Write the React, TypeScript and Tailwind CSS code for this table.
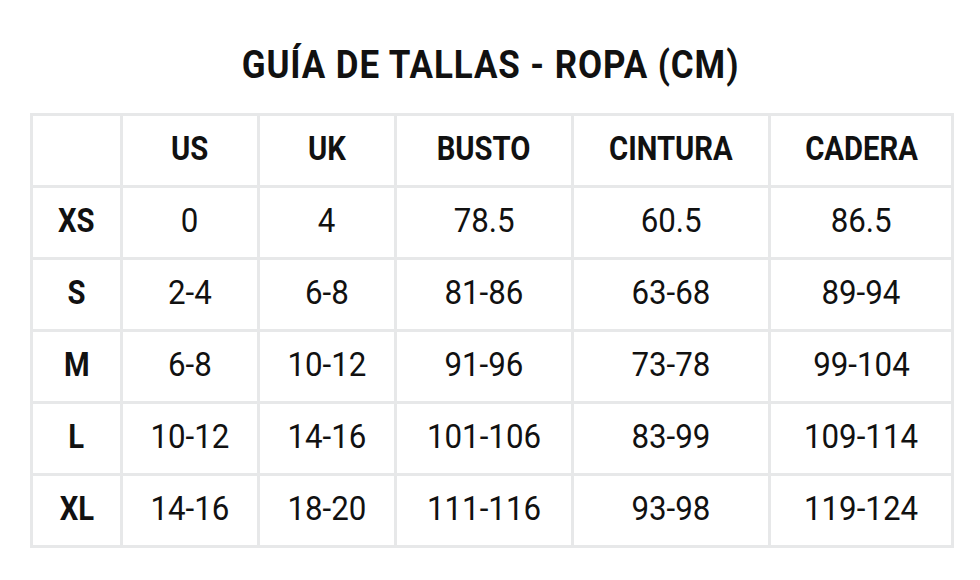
import React from "react";

const header = ["", "US", "UK", "BUSTO", "CINTURA", "CADERA"];
const rows = [
  ["XS", "0", "4", "78.5", "60.5", "86.5"],
  ["S", "2-4", "6-8", "81-86", "63-68", "89-94"],
  ["M", "6-8", "10-12", "91-96", "73-78", "99-104"],
  ["L", "10-12", "14-16", "101-106", "83-99", "109-114"],
  ["XL", "14-16", "18-20", "111-116", "93-98", "119-124"],
];

function Cell({ text, bold }: { text: string; bold?: boolean }) {
  return (
    <div className="bg-white flex items-center justify-center h-[69px] pb-[5px]">
      <span
        className={
          "inline-block leading-none text-[34px] text-[#111] " +
          (bold ? "font-bold scale-x-[0.86]" : "font-normal scale-x-[0.92]")
        }
      >
        {text}
      </span>
    </div>
  );
}

export default function App() {
  return (
    <div
      className="w-[980px] h-[580px] bg-white overflow-hidden"
      style={{ fontFamily: "Roboto, 'Liberation Sans', sans-serif" }}
    >
      <div className="pt-[46px] flex justify-center">
        <h1 className="inline-block text-[38px] leading-none font-bold tracking-[1px] text-[#111] scale-x-[0.92]">
          GUÍA DE TALLAS - ROPA (CM)
        </h1>
      </div>
      <div className="mt-[29px] ml-[30px] w-[924px] grid grid-cols-[87px_134px_134px_174px_194px_180px] gap-[3px] p-[3px] bg-[#e7e8e9]">
        {header.map((h, i) => (
          <Cell key={"h" + i} text={h} bold />
        ))}
        {rows.map((r, ri) =>
          r.map((c, ci) => <Cell key={ri + "-" + ci} text={c} bold={ci === 0} />)
        )}
      </div>
    </div>
  );
}
